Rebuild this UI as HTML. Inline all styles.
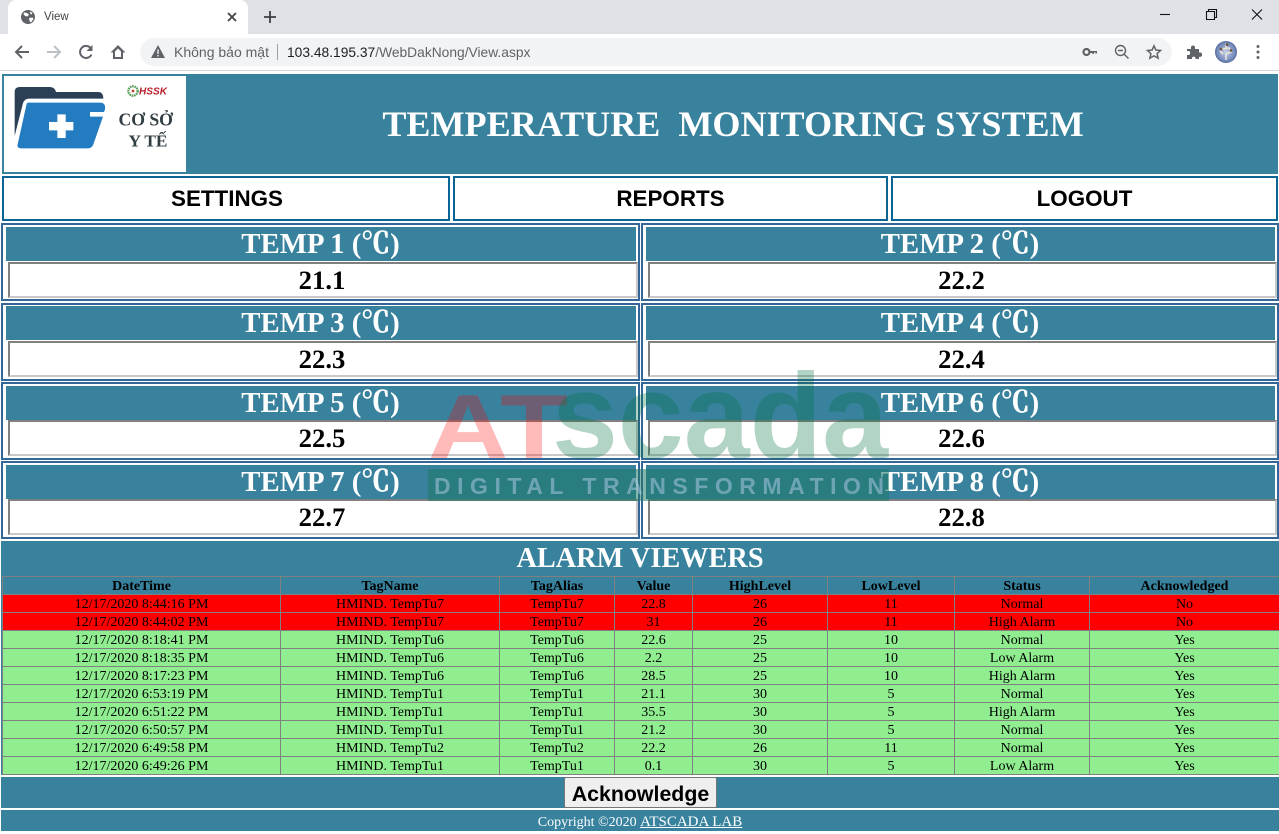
<!DOCTYPE html>
<html><head><meta charset="utf-8"><title>View</title>
<style>
html,body{margin:0;padding:0;width:1279px;height:834px;overflow:hidden;background:#fff}
div,a,svg{position:absolute;box-sizing:border-box}
.s{font-family:"Liberation Serif","Noto Serif CJK SC",serif}
.a{font-family:"Liberation Sans",sans-serif}
.teal{background:#38829e}
.nav{top:176px;height:45px;border:2px solid #0a6496;background:#fff;font:bold 22.4px/42px "Liberation Sans",sans-serif;color:#000;text-align:center}
.h{height:34px;background:#38829e;color:#fff;font:bold 28.8px/35px "Liberation Serif","Noto Serif CJK SC",serif;text-align:center;padding-right:1px}
.h span{-webkit-text-stroke:.6px #fff}
.out{width:639px;height:78px;border:2px solid #336699;background:#fff}
.v{height:36px;background:#fff;border:2px solid;border-color:#808080 #c8c8c8 #c8c8c8 #808080;color:#000;font:bold 26.67px/33px "Liberation Serif",serif;text-align:center;padding-right:2px}
table{position:absolute;left:2px;top:576px;width:1277px;border-collapse:collapse;table-layout:fixed;font:14px/15px "Liberation Serif",serif;color:#000}
td,th{border:1px solid #808080;padding:2px 0 0 0;height:15px;text-align:center;white-space:nowrap;overflow:hidden}
th{font-weight:bold;background:#38829e}
.r td{background:#ff0000}.g td{background:#90ee90}
</style></head><body>

<!-- browser chrome -->
<div style="left:0;top:0;width:1279px;height:34px;background:#dee1e6"></div>
<div style="left:8px;top:0;width:240px;height:35px;background:#fff;border-radius:8px 8px 0 0"></div>
<svg style="left:20px;top:9px" width="16" height="16" viewBox="0 0 16 16"><circle cx="8" cy="8" r="7" fill="#5f6368"/><path d="M4 3.500l3 .5 2 1.500-1.500 2-2.500-.5-1.500-2zM9 9l3.500-.5 1 1.500-2.500 3.500-1.500-1.500zM10 2.500l2.500 1.500-1 1.500-1.500-1z" fill="#fff"/></svg>
<div class="a" style="left:44px;top:10px;font-size:11.5px;line-height:14px;color:#444">View</div>
<svg style="left:225px;top:10px" width="14" height="14" viewBox="0 0 14 14"><path d="M3 3l8 8M11 3l-8 8" stroke="#444" stroke-width="1.800"/></svg>
<svg style="left:263px;top:10px" width="14" height="14" viewBox="0 0 14 14"><path d="M7 1v12M1 7h12" stroke="#3c4043" stroke-width="1.800"/></svg>
<svg style="left:1155px;top:8px" width="112" height="14" viewBox="0 0 112 14"><path d="M5 6.500h10" stroke="#111" stroke-width="1.100"/><path d="M51.500 3.500h8v8h-8zM53.500 3.500v-2h8v8h-2" fill="none" stroke="#111" stroke-width="1.100"/><path d="M97 1.500l10 10M107 1.500l-10 10" stroke="#111" stroke-width="1.100"/></svg>

<div style="left:0;top:34px;width:1279px;height:37px;background:#fff;border-bottom:1px solid #d4d6d9"></div>
<svg style="left:13px;top:43px" width="18" height="18" viewBox="0 0 18 18"><path d="M16 9H3M9 3L3 9l6 6" fill="none" stroke="#5f6368" stroke-width="2"/></svg>
<svg style="left:45px;top:43px" width="18" height="18" viewBox="0 0 18 18"><path d="M2 9h13M9 3l6 6-6 6" fill="none" stroke="#bdc1c6" stroke-width="2"/></svg>
<svg style="left:77px;top:43px" width="18" height="18" viewBox="0 0 18 18"><path d="M14.500 11.500A6 6 0 1 1 14 5.500" fill="none" stroke="#5f6368" stroke-width="2"/><path d="M15.500 2v6h-6z" fill="#5f6368"/></svg>
<svg style="left:109px;top:43px" width="18" height="18" viewBox="0 0 18 18"><path d="M9 2L1.500 9.500H4V16h10V9.500h2.500zM6 14V8.500l3-3 3 3V14z" fill="#5f6368" fill-rule="evenodd"/></svg>
<div style="left:140px;top:38px;width:1032px;height:28px;background:#f1f3f4;border-radius:14px"></div>
<svg style="left:150px;top:44px" width="16" height="15" viewBox="0 0 16 15"><path d="M8 1l7 13H1z" fill="#5f6368"/><path d="M8 5.500v4.500M8 11v1.500" stroke="#f1f3f4" stroke-width="1.400"/></svg>
<div class="a" style="left:174px;top:45px;font-size:14px;line-height:15px;color:#5f6368;white-space:nowrap">Không bảo mật</div>
<div style="left:277px;top:44px;width:1px;height:16px;background:#9aa0a6"></div>
<div class="a" style="left:287px;top:45px;font-size:13.8px;line-height:15px;color:#5f6368;white-space:nowrap"><span style="color:#202124">103.48.195.37</span>/WebDakNong/View.aspx</div>
<svg style="left:1082px;top:46px" width="16" height="12" viewBox="0 0 16 12"><circle cx="4.500" cy="6" r="3" fill="none" stroke="#5f6368" stroke-width="2.200"/><path d="M7 5h8v2.500h-1.500V6.500H12v1.500h-1.500V7H7z" fill="#5f6368"/></svg>
<svg style="left:1114px;top:44px" width="16" height="16" viewBox="0 0 16 16"><circle cx="6.500" cy="6.500" r="5" fill="none" stroke="#5f6368" stroke-width="1.400"/><path d="M10.200 10.200L14.500 14.500M4 6.500h5" stroke="#5f6368" stroke-width="1.400"/></svg>
<svg style="left:1146px;top:44px" width="16" height="16" viewBox="0 0 16 16"><path d="M8 1.800l1.900 4.200 4.600.5-3.400 3.100 1 4.500L8 11.800l-4.100 2.300 1-4.500L1.500 6.500l4.600-.5z" fill="none" stroke="#5f6368" stroke-width="1.500"/></svg>
<svg style="left:1186px;top:44px" width="16" height="16" viewBox="0 0 16 16"><path d="M1 5h4V3.500a2 2 0 0 1 4 0V5h4v3.500h1a2.200 2.200 0 0 1 0 4.400h-1V15H9.500v-1a1.800 1.800 0 0 0-3.500 0v1H1v-4h1.200a2 2 0 0 0 0-4H1z" fill="#5f6368"/></svg>
<svg style="left:1215px;top:41px" width="22" height="22" viewBox="0 0 22 22"><defs><radialGradient id="av" cx=".5" cy=".5" r=".6"><stop offset="0" stop-color="#c9d2e6"/><stop offset=".7" stop-color="#6f86b8"/><stop offset="1" stop-color="#2f4378"/></radialGradient></defs><circle cx="11" cy="11" r="11" fill="url(#av)"/><path d="M7 8l7-1 2 4-5 2v6M11 2v5M5 10l3 3" stroke="#e8e4dc" stroke-width="1.600" fill="none"/><circle cx="12" cy="3.500" r="1.500" fill="#6e5a48"/><circle cx="6" cy="8" r="1.400" fill="#6e5a48"/><circle cx="16" cy="9.500" r="1.400" fill="#6e5a48"/></svg>
<svg style="left:1256px;top:44px" width="4" height="16" viewBox="0 0 4 16"><circle cx="2" cy="2.500" r="1.500" fill="#5f6368"/><circle cx="2" cy="8" r="1.500" fill="#5f6368"/><circle cx="2" cy="13.500" r="1.500" fill="#5f6368"/></svg>

<!-- header -->
<div class="teal" style="left:2px;top:74px;width:1276px;height:100px"></div>
<div style="left:4px;top:76px;width:182px;height:96px;background:#fff"></div>
<svg style="left:4px;top:76px;filter:blur(.35px)" width="182" height="96" viewBox="0 0 546 288">
<path d="M32 180V48Q32 33 47 33H138Q152 33 156 48H282Q298 48 298 68H75Q60 68 56 85z" fill="#2b3f55"/>
<path d="M72 80H288Q306 80 303 100L300 108H258V122H297L268 205Q264 217 250 217H52Q38 217 41 205L66 92Q68 80 72 80z" fill="#237bc0"/>
<path d="M160 115h25v23h23v25h-23v23h-25v-23h-25v-25h25z" fill="#fff"/>
<circle cx="387" cy="45" r="14" fill="none" stroke="#5f9e5f" stroke-width="7" stroke-dasharray="5 2"/><circle cx="387" cy="45" r="4" fill="#c0392b"/>
<text x="405" y="55" font-family="Liberation Sans" font-weight="bold" font-style="italic" font-size="30" textLength="84" lengthAdjust="spacingAndGlyphs" fill="#b5202c">HSSK</text>
<text x="425" y="148" text-anchor="middle" font-family="Liberation Serif" font-weight="bold" font-size="53" fill="#333e44">CƠ SỞ</text>
<text x="432" y="212" text-anchor="middle" font-family="Liberation Serif" font-weight="bold" font-size="52" fill="#333e44">Y TẾ</text>
</svg>
<div class="s" style="left:186px;top:101px;width:1094px;text-align:center;color:#fff;font-weight:bold;font-size:36.1px;line-height:46px;white-space:pre">TEMPERATURE  MONITORING SYSTEM</div>

<!-- nav -->
<div class="nav" style="left:2px;width:448px;padding-left:2px">SETTINGS</div>
<div class="nav" style="left:453px;width:435px">REPORTS</div>
<div class="nav" style="left:891px;width:387px">LOGOUT</div>

<!-- temp panels -->
<div class="out" style="left:1px;top:223px"></div><div class="h" style="left:6px;top:227px;width:630px">TEMP 1 (<span>℃</span>)</div><div class="v" style="left:8px;top:262px;width:630px">21.1</div>
<div class="out" style="left:641px;top:223px;width:638px"></div><div class="h" style="left:646px;top:227px;width:629px">TEMP 2 (<span>℃</span>)</div><div class="v" style="left:648px;top:262px;width:629px">22.2</div>
<div class="out" style="left:1px;top:303px"></div><div class="h" style="left:6px;top:306px;width:630px">TEMP 3 (<span>℃</span>)</div><div class="v" style="left:8px;top:341px;width:630px">22.3</div>
<div class="out" style="left:641px;top:303px;width:638px"></div><div class="h" style="left:646px;top:306px;width:629px">TEMP 4 (<span>℃</span>)</div><div class="v" style="left:648px;top:341px;width:629px">22.4</div>
<div class="out" style="left:1px;top:382px"></div><div class="h" style="left:6px;top:386px;width:630px">TEMP 5 (<span>℃</span>)</div><div class="v" style="left:8px;top:420px;width:630px">22.5</div>
<div class="out" style="left:641px;top:382px;width:638px"></div><div class="h" style="left:646px;top:386px;width:629px">TEMP 6 (<span>℃</span>)</div><div class="v" style="left:648px;top:420px;width:629px">22.6</div>
<div class="out" style="left:1px;top:461px"></div><div class="h" style="left:6px;top:465px;width:630px">TEMP 7 (<span>℃</span>)</div><div class="v" style="left:8px;top:499px;width:630px">22.7</div>
<div class="out" style="left:641px;top:461px;width:638px"></div><div class="h" style="left:646px;top:465px;width:629px">TEMP 8 (<span>℃</span>)</div><div class="v" style="left:648px;top:499px;width:629px">22.8</div>

<!-- alarm -->
<div class="teal" style="left:1px;top:541px;width:1278px;height:234px"></div>
<div class="s" style="left:1px;top:542px;width:1278px;text-align:center;color:#fff;font-weight:bold;font-size:28.3px;line-height:34px">ALARM VIEWERS</div>
<table>
<colgroup><col style="width:278px"><col style="width:219px"><col style="width:115px"><col style="width:78px"><col style="width:135px"><col style="width:127px"><col style="width:135px"><col style="width:190px"></colgroup>
<tr><th>DateTime</th><th>TagName</th><th>TagAlias</th><th>Value</th><th>HighLevel</th><th>LowLevel</th><th>Status</th><th>Acknowledged</th></tr>
<tr class="r"><td>12/17/2020 8:44:16 PM</td><td>HMIND. TempTu7</td><td>TempTu7</td><td>22.8</td><td>26</td><td>11</td><td>Normal</td><td>No</td></tr>
<tr class="r"><td>12/17/2020 8:44:02 PM</td><td>HMIND. TempTu7</td><td>TempTu7</td><td>31</td><td>26</td><td>11</td><td>High Alarm</td><td>No</td></tr>
<tr class="g"><td>12/17/2020 8:18:41 PM</td><td>HMIND. TempTu6</td><td>TempTu6</td><td>22.6</td><td>25</td><td>10</td><td>Normal</td><td>Yes</td></tr>
<tr class="g"><td>12/17/2020 8:18:35 PM</td><td>HMIND. TempTu6</td><td>TempTu6</td><td>2.2</td><td>25</td><td>10</td><td>Low Alarm</td><td>Yes</td></tr>
<tr class="g"><td>12/17/2020 8:17:23 PM</td><td>HMIND. TempTu6</td><td>TempTu6</td><td>28.5</td><td>25</td><td>10</td><td>High Alarm</td><td>Yes</td></tr>
<tr class="g"><td>12/17/2020 6:53:19 PM</td><td>HMIND. TempTu1</td><td>TempTu1</td><td>21.1</td><td>30</td><td>5</td><td>Normal</td><td>Yes</td></tr>
<tr class="g"><td>12/17/2020 6:51:22 PM</td><td>HMIND. TempTu1</td><td>TempTu1</td><td>35.5</td><td>30</td><td>5</td><td>High Alarm</td><td>Yes</td></tr>
<tr class="g"><td>12/17/2020 6:50:57 PM</td><td>HMIND. TempTu1</td><td>TempTu1</td><td>21.2</td><td>30</td><td>5</td><td>Normal</td><td>Yes</td></tr>
<tr class="g"><td>12/17/2020 6:49:58 PM</td><td>HMIND. TempTu2</td><td>TempTu2</td><td>22.2</td><td>26</td><td>11</td><td>Normal</td><td>Yes</td></tr>
<tr class="g"><td>12/17/2020 6:49:26 PM</td><td>HMIND. TempTu1</td><td>TempTu1</td><td>0.1</td><td>30</td><td>5</td><td>Low Alarm</td><td>Yes</td></tr>
</table>

<!-- acknowledge + footer -->
<div class="teal" style="left:1px;top:777px;width:1278px;height:31px"></div>
<div class="a" style="left:564px;top:777px;width:153px;height:31px;background:#efefef;border:1px solid #767676;border-radius:2px;font-weight:bold;font-size:21.33px;line-height:32px;text-align:center;color:#000">Acknowledge</div>
<div class="teal" style="left:1px;top:810px;width:1278px;height:21px"></div>
<div class="s" style="left:1px;top:814px;width:1278px;text-align:center;color:#fff;font-size:14px;line-height:16px">Copyright ©2020 <span style="text-decoration:underline;font-size:15px">ATSCADA LAB</span></div>

<!-- watermark -->
<svg style="left:0;top:0;pointer-events:none" width="1279" height="834" viewBox="0 0 1279 834">
<rect x="428" y="469" width="461" height="32" fill="#1f7a66" fill-opacity=".55"/>
<text x="428" y="458" font-family="Liberation Sans" font-weight="bold" font-size="91" textLength="140" lengthAdjust="spacingAndGlyphs" fill="#ff0000" fill-opacity=".27">AT</text>
<text x="552" y="458" font-family="Liberation Sans" font-weight="bold" font-size="122" textLength="336" lengthAdjust="spacingAndGlyphs" fill="#007040" fill-opacity=".3">scada</text>
<text x="434" y="494" font-family="Liberation Sans" font-weight="bold" font-size="23" textLength="450" fill="#b2cce9" fill-opacity=".5">DIGITAL TRANSFORMATION</text>
</svg>
</body></html>
